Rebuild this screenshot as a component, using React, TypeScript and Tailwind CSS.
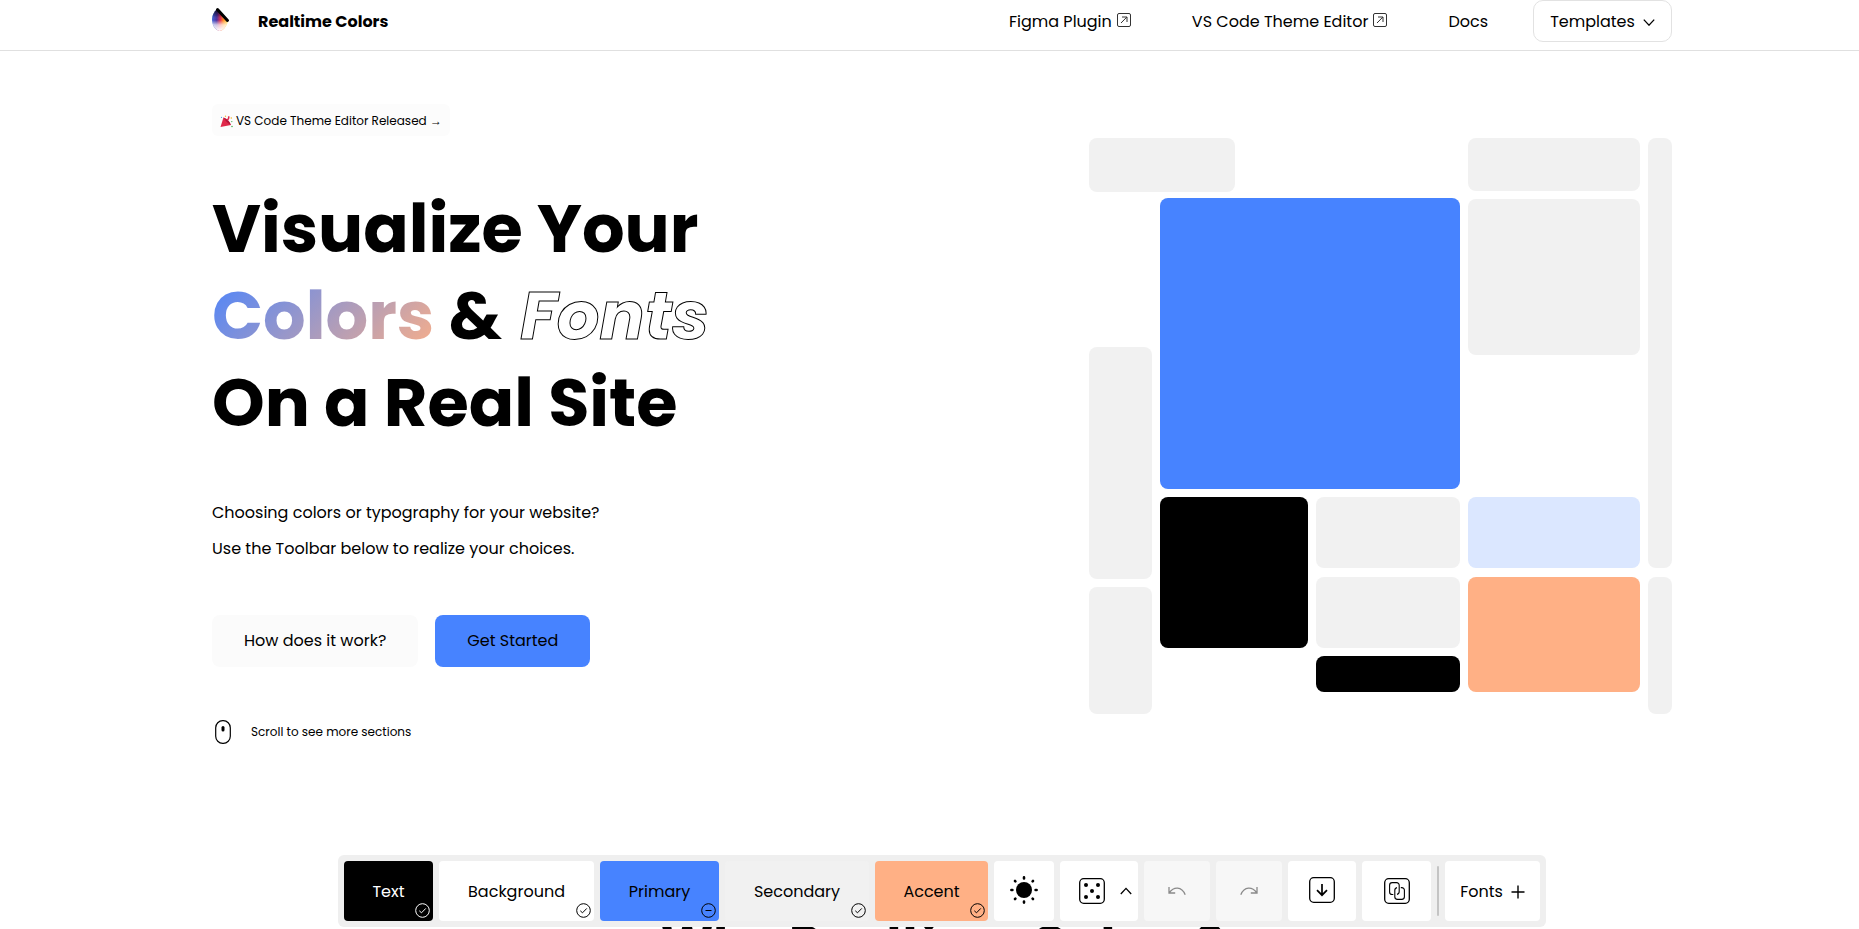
import type { ReactNode } from "react";

function Logo() {
  return (
    <svg width="20" height="26" viewBox="0 0 20 26" aria-hidden="true">
      <defs>
        <linearGradient id="hue" x1="0" y1="0.4" x2="1" y2="0.5">
          <stop offset="0" stopColor="#3a62d8" />
          <stop offset="0.3" stopColor="#4a2a9c" />
          <stop offset="0.52" stopColor="#e0284a" />
          <stop offset="0.72" stopColor="#ff8a1c" />
          <stop offset="1" stopColor="#ffe04a" />
        </linearGradient>
        <linearGradient id="fade" x1="0" y1="0" x2="0" y2="1">
          <stop offset="0" stopColor="#000" stopOpacity="0.85" />
          <stop offset="0.3" stopColor="#000" stopOpacity="0.2" />
          <stop offset="0.5" stopColor="#fff" stopOpacity="0" />
          <stop offset="0.72" stopColor="#fff" stopOpacity="0.72" />
          <stop offset="1" stopColor="#fff" />
        </linearGradient>
      </defs>
      <path d="M5 3 L16 15 C15 20 11 25 7 25 C2 23 0 18 0 13 C0 9 2 6 5 3Z" fill="url(#hue)" />
      <path d="M5 3 L16 15 C15 20 11 25 7 25 C2 23 0 18 0 13 C0 9 2 6 5 3Z" fill="url(#fade)" />
      <path d="M5.5 3.5 L15.5 14.5" stroke="#000" strokeWidth="3" strokeLinecap="round" />
    </svg>
  );
}

function PartyPopper() {
  return (
    <svg width="13" height="13" viewBox="0 0 13 13" aria-hidden="true">
      <path d="M0.5 12 L3.5 2.5 Q9 4.5 11 10Z" fill="#e0294a" />
      <path d="M3.5 2.5 Q9 4.5 11 10 Q6.5 8 3.5 2.5Z" fill="#b3153a" />
      <path d="M7 5 Q9.4 4 8.6 1.2" stroke="#e0294a" strokeWidth="1.4" fill="none" />
      <circle cx="5.5" cy="1.2" r="0.7" fill="#f2b632" />
      <circle cx="11.3" cy="3" r="0.8" fill="#f2b632" />
      <circle cx="1.5" cy="2.4" r="0.6" fill="#5aa9e6" />
      <circle cx="12" cy="11.5" r="0.8" fill="#4bb05a" />
      <circle cx="11.8" cy="6.6" r="0.7" fill="#4bb05a" />
    </svg>
  );
}

function ExternalIcon() {
  return (
    <svg width="14" height="14" viewBox="0 0 14 14" fill="none" stroke="#333" strokeWidth="1" aria-hidden="true">
      <rect x="0.5" y="0.5" width="13" height="13" rx="1.5" />
      <path d="M4 10 L9.8 4.1 M5 4 H10 V9" />
    </svg>
  );
}

function Status({ kind }: { kind: "check" | "minus" }) {
  return (
    <svg
      className="absolute right-[3px] bottom-[3px]"
      width="15"
      height="15"
      viewBox="0 0 15 15"
      fill="none"
      stroke="currentColor"
      strokeWidth="1"
      aria-hidden="true"
    >
      <circle cx="7.5" cy="7.5" r="6.8" />
      {kind === "check" ? <path d="M4.3 7.8 L6.5 9.8 L10.8 5.4" /> : <path d="M4.5 7.5 H10.5" />}
    </svg>
  );
}

function Tool({ label, className, children }: { label: string; className: string; children: ReactNode }) {
  return (
    <button type="button" aria-label={label} className={`flex h-[60px] items-center justify-center rounded ${className}`}>
      {children}
    </button>
  );
}

function Swatch({ name, className, kind = "check" }: { name: string; className: string; kind?: "check" | "minus" }) {
  return (
    <button type="button" className={`relative flex h-[60px] items-center justify-center rounded pt-[2px] ${className}`}>
      {name}
      <Status kind={kind} />
    </button>
  );
}

function Header() {
  return (
    <header className="flex h-[51px] justify-center border-b border-[#e0e0e0] pl-[25px]">
      <div className="flex h-[42px] w-full max-w-[1460px] items-center justify-between">
        <a href="#home" className="flex items-center gap-[26px] font-bold">
          <span className="-mt-1">
            <Logo />
          </span>
          <span className="pt-[2px]">Realtime Colors</span>
        </a>
        <nav className="flex items-center">
          <div className="flex items-baseline gap-[61px] pt-[2px]">
            <a href="#figma" className="flex items-baseline gap-[5px]">
              Figma Plugin <ExternalIcon />
            </a>
            <a href="#vscode" className="flex items-baseline gap-[5px]">
              VS Code Theme Editor <ExternalIcon />
            </a>
            <a href="#docs">Docs</a>
          </div>
          <button
            type="button"
            className="ml-[45px] flex h-[42px] w-[139px] items-center justify-center gap-2 rounded-[10px] border border-[#e2e2e2] pt-[2px]"
          >
            Templates
            <svg width="12" height="8" viewBox="0 0 12 8" fill="none" stroke="#000" strokeWidth="1.3" aria-hidden="true">
              <path d="M0.8 1.6 L6 7.2 L11.2 1.6" />
            </svg>
          </button>
        </nav>
      </div>
    </header>
  );
}

function Intro() {
  return (
    <div className="flex flex-col items-start pt-[53px]">
      <a href="#released" className="flex h-8 items-center gap-[3px] rounded-md bg-[#fcfcfc] px-2 pt-[2px] text-xs">
        <PartyPopper />
        VS Code Theme Editor Released →
      </a>
      <h1 className="mt-[49px] text-[67px] leading-[87px] font-bold whitespace-nowrap">
        Visualize Your
        <br />
        <span className="bg-[linear-gradient(135deg,#4783ff,#ffb085)] bg-clip-text text-transparent">Colors</span> &amp;{" "}
        <em className="pl-1 text-transparent [-webkit-text-stroke:1px_#000]">Fonts</em>
        <br />
        On a Real Site
      </h1>
      <p className="mt-[49px] leading-9">
        Choosing colors or typography for your website?
        <br />
        Use the Toolbar below to realize your choices.
      </p>
      <div className="mt-12 flex gap-[17px]">
        <button type="button" className="h-[52px] rounded-lg bg-[#fbfbfb] px-8">
          How does it work?
        </button>
        <button type="button" className="h-[52px] rounded-lg bg-[#4783ff] px-8">
          Get Started
        </button>
      </div>
      <div className="mt-[53px] flex items-center gap-5 pl-[3px] text-xs">
        <svg width="16" height="24" viewBox="0 0 16 24" fill="none" stroke="#000" strokeWidth="1.2" aria-hidden="true">
          <rect x="0.7" y="0.7" width="14.6" height="22.6" rx="7" />
          <path d="M8 7.5 V10" strokeWidth="3" strokeLinecap="round" />
        </svg>
        Scroll to see more sections
      </div>
    </div>
  );
}

function Mosaic() {
  return (
    <div className="mt-[87px] flex h-[576px] gap-2" aria-hidden="true">
      <div className="flex w-[63px] flex-col gap-2">
        <div className="mb-auto h-[54px] w-[146px] rounded-lg bg-[#f1f1f1]" />
        <div className="h-[232px] rounded-lg bg-[#f1f1f1]" />
        <div className="h-[127px] rounded-lg bg-[#f1f1f1]" />
      </div>
      <div className="flex w-[300px] flex-col gap-2 pt-[60px]">
        <div className="h-[291px] rounded-lg bg-[#4783ff]" />
        <div className="flex items-start gap-2">
          <div className="h-[151px] w-[148px] rounded-lg bg-black" />
          <div className="flex flex-1 flex-col gap-2">
            <div className="mb-px h-[71px] rounded-lg bg-[#f1f1f1]" />
            <div className="h-[71px] rounded-lg bg-[#f1f1f1]" />
            <div className="h-9 rounded-lg bg-black" />
          </div>
        </div>
      </div>
      <div className="flex w-[172px] flex-col gap-2 pb-[22px]">
        <div className="h-[53px] rounded-lg bg-[#f1f1f1]" />
        <div className="mb-auto h-[156px] rounded-lg bg-[#f1f1f1]" />
        <div className="mb-px h-[71px] rounded-lg bg-[#dbe7ff]" />
        <div className="h-[115px] rounded-lg bg-[#ffb085]" />
      </div>
      <div className="flex w-6 flex-col gap-2">
        <div className="mb-px flex-1 rounded-lg bg-[#f1f1f1]" />
        <div className="h-[137px] rounded-lg bg-[#f1f1f1]" />
      </div>
    </div>
  );
}

function Toolbar() {
  return (
    <div className="fixed inset-x-0 bottom-[2px] flex justify-center pl-[25px]">
      <div role="toolbar" aria-label="Theme" className="flex items-center gap-[6px] rounded-md bg-[#efefef] p-[6px]">
        <Swatch name="Text" className="w-[89px] bg-black text-white" />
        <Swatch name="Background" className="w-[155px] bg-white" />
        <Swatch name="Primary" className="w-[119px] bg-[#4783ff]" kind="minus" />
        <Swatch name="Secondary" className="w-[144px] bg-[#f1f1f1]" />
        <Swatch name="Accent" className="w-[113px] bg-[#ffb085]" />
        <Tool label="Toggle brightness" className="w-[60px] bg-white pb-[2px]">
          <svg width="30" height="30" viewBox="0 0 30 30" stroke="#000" strokeWidth="2.6" strokeLinecap="round">
            <circle cx="15" cy="15" r="8" stroke="none" />
            <path d="M15 2.4V3.4M15 26.6V27.6M2.4 15H3.4M26.6 15H27.6M6 6L6.4 6.4M23.6 23.6L24 24M6 24L6.4 23.6M23.6 6.4L24 6" />
          </svg>
        </Tool>
        <Tool label="Randomize" className="w-[78px] gap-[15px] bg-white pl-3 pr-0">
          <svg width="26" height="26" viewBox="0 0 26 26" fill="none" aria-hidden="true">
            <rect x="0.7" y="0.7" width="24.6" height="24.6" rx="4" stroke="#000" strokeWidth="1.3" />
            <g fill="#000">
              <circle cx="7" cy="7" r="2" />
              <circle cx="19" cy="7" r="2" />
              <circle cx="13" cy="13" r="2" />
              <circle cx="7" cy="19" r="2" />
              <circle cx="19" cy="19" r="2" />
            </g>
          </svg>
          <svg width="12" height="8" viewBox="0 0 12 8" fill="none" stroke="#000" strokeWidth="1.3" aria-hidden="true">
            <path d="M0.8 7 L6 1.4 L11.2 7" />
          </svg>
        </Tool>
        <Tool label="Undo" className="w-[66px] bg-[#f7f7f7]">
          <svg width="18" height="10" viewBox="0 0 18 10" fill="none" stroke="#8a8a8a" strokeWidth="1.3">
            <path d="M1 1V7H7.2M1.2 6.8C4 3 7 2 9.6 2.2C13 2.4 15.6 5 17.2 8.8" />
          </svg>
        </Tool>
        <Tool label="Redo" className="w-[66px] bg-[#f7f7f7]">
          <svg width="18" height="10" viewBox="0 0 18 10" fill="none" stroke="#8a8a8a" strokeWidth="1.3">
            <path d="M17 1V7H10.8M16.8 6.8C14 3 11 2 8.4 2.2C5 2.4 2.4 5 0.8 8.8" />
          </svg>
        </Tool>
        <Tool label="Export" className="w-[68px] bg-white pb-[2px]">
          <svg width="26" height="26" viewBox="0 0 26 26" fill="none" stroke="#000" strokeWidth="1.3">
            <rect x="0.7" y="0.7" width="24.6" height="24.6" rx="4" />
            <path d="M13 7V18M8 13.2L13 18.2L18 13.2" strokeWidth="1.7" />
          </svg>
        </Tool>
        <Tool label="Copy link" className="w-[69px] bg-white">
          <svg width="26" height="26" viewBox="0 0 26 26" fill="none" stroke="#000" strokeWidth="1.3">
            <rect x="0.7" y="0.7" width="24.6" height="24.6" rx="4" />
            <path
              d="M9.3 16.5H8.2A2.6 2.6 0 0 1 5.6 13.9V7.2A2.6 2.6 0 0 1 8.2 4.6H12.6A2.6 2.6 0 0 1 15.2 7.2V13.6A2.8 2.8 0 0 1 13 16.4M16.8 9.6H17.8A2.6 2.6 0 0 1 20.4 12.2V18.8A2.6 2.6 0 0 1 17.8 21.4H13.4A2.6 2.6 0 0 1 10.8 18.8V12.4A2.8 2.8 0 0 1 13 9.6"
              strokeWidth="1.1"
            />
          </svg>
        </Tool>
        <span className="h-[50px] w-[2px] rounded-full bg-[#c4c4c4]" />
        <button type="button" className="flex h-[60px] w-[95px] items-center justify-center gap-2 rounded bg-white pt-[2px]">
          Fonts
          <svg width="14" height="14" viewBox="0 0 14 14" stroke="#000" strokeWidth="1.4" aria-hidden="true">
            <path d="M7 0.5V13.5M0.5 7H13.5" />
          </svg>
        </button>
      </div>
    </div>
  );
}

export default function App() {
  return (
    <div className="h-screen overflow-hidden bg-white font-['Poppins','Noto_Sans',sans-serif] text-base text-black">
      <Header />
      <main>
        <section className="flex justify-center pl-[25px]">
          <div className="flex w-full max-w-[1460px] items-start justify-between">
            <Intro />
            <Mosaic />
          </div>
        </section>
        <section className="flex justify-center pt-[164px] pl-[25px]">
          <h2 className="text-[50px] leading-[72px] font-bold">Why Realtime Colors?</h2>
        </section>
      </main>
      <Toolbar />
    </div>
  );
}
